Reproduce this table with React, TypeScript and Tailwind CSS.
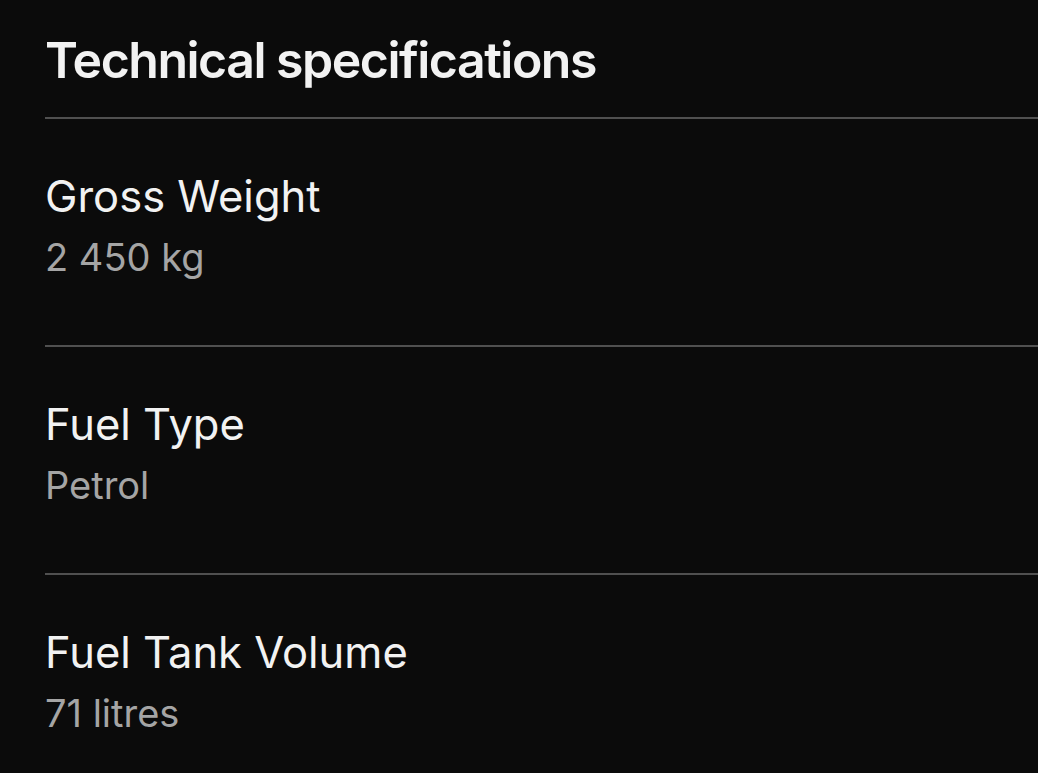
import React from "react";

const specs = [
  { label: "Gross Weight", value: "2 450 kg" },
  { label: "Fuel Type", value: "Petrol" },
  { label: "Fuel Tank Volume", value: "71 litres" },
];

export default function App() {
  return (
    <div
      className="min-h-[773px] w-full bg-[#0b0b0b] pl-[45px] text-white overflow-hidden"
      style={{ fontFamily: "Inter, 'Liberation Sans', sans-serif" }}
    >
      <h2 className="pt-[31px] pb-[28px] text-[50px] leading-[58px] font-semibold tracking-[-0.03em] text-[#f2f2f2] border-b-2 border-[#505050]">
        Technical specifications
      </h2>
      {specs.map((s, i) => (
        <div
          key={s.label}
          className={`pt-[47px] pb-[57px] ${i < specs.length - 1 ? "border-b-2 border-[#505050]" : ""}`}
        >
          <div className="text-[43.5px] leading-[60px] text-[#f2f2f2]">{s.label}</div>
          <div className="text-[38px] leading-[62px] text-[#a5a5a5]">{s.value}</div>
        </div>
      ))}
    </div>
  );
}
